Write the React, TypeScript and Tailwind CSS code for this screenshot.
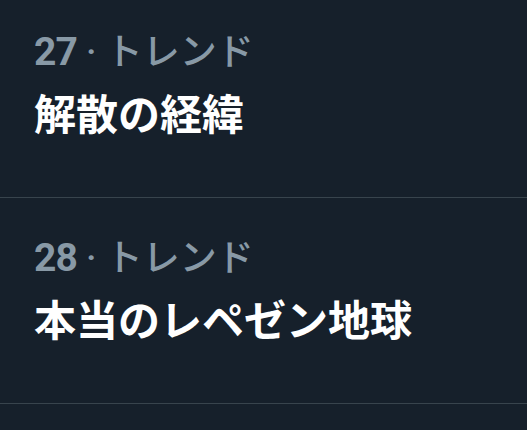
import React from "react";

const trends = [
  { rank: 27, label: "トレンド", title: "解散の経緯" },
  { rank: 28, label: "トレンド", title: "本当のレペゼン地球" },
];

export default function App() {
  return (
    <div
      className="w-[527px] h-[430px] overflow-hidden bg-[#16202b]"
      style={{ fontFamily: 'Roboto, "Noto Sans CJK JP", "Noto Sans", sans-serif' }}
    >
      <div className="-mt-[8px] flex flex-col">
        {trends.map((t) => (
          <div
            key={t.rank}
            className="h-[206px] border-b border-[#38444d] px-[34px] pt-[34px] flex flex-col"
          >
            <div className="text-[37px] leading-[52px] text-[#8899a6] font-medium">
              <span className="text-[39px] font-bold tracking-[-1px]">{t.rank}</span> · {t.label}
            </div>
            <div className="text-[42px] leading-[58px] text-white font-bold mt-[8px]">
              {t.title}
            </div>
          </div>
        ))}
      </div>
    </div>
  );
}
